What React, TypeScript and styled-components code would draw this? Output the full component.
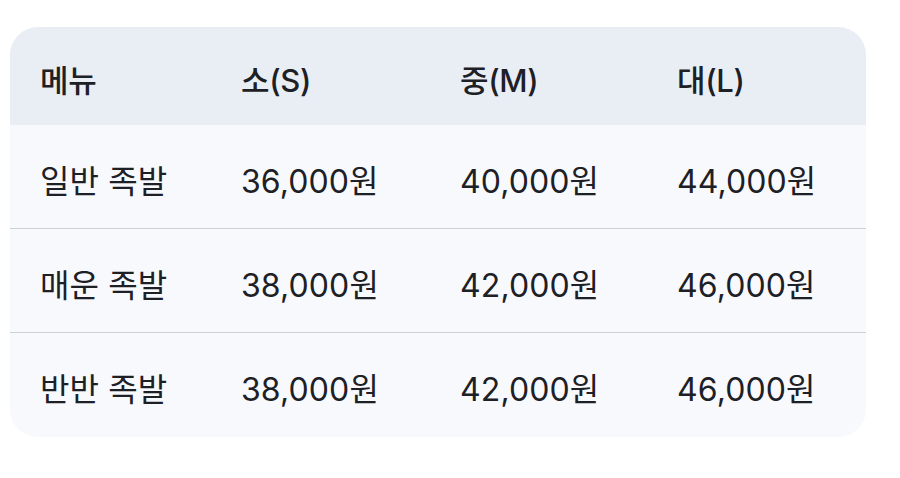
import React from "react";
import styled, { createGlobalStyle } from "styled-components";

const Global = createGlobalStyle`
  html, body { margin: 0; padding: 0; background: #ffffff; }
  body { font-family: Inter, "Noto Sans CJK KR", sans-serif; color: #1d2025; }
`;

const Page = styled.div`
  padding: 27px 0 0 10px;
`;

const Table = styled.div`
  width: 856px;
  border-radius: 28px;
  overflow: hidden;
  background: #f8f9fd;
  display: grid;
  grid-template-columns: 201px 219px 217px 219px;
`;

const Row = styled.div<{ $head?: boolean; $last?: boolean }>`
  display: contents;
  & > div {
    background: ${(p) => (p.$head ? "#e9eef4" : "#f8f9fd")};
    height: ${(p) => (p.$head ? "98px" : "104px")};
    font-weight: ${(p) => (p.$head ? 500 : 400)};
    font-size: ${(p) => (p.$head ? "31px" : "32px")};
    letter-spacing: ${(p) => (p.$head ? "-0.3px" : "0.1px")};
    border-bottom: ${(p) => (p.$head || p.$last ? "none" : "1px solid #cdd0d6")};
  }
`;

const Cell = styled.div`
  display: flex;
  align-items: center;
  padding-left: 30px;
  padding-top: 4px;
  box-sizing: border-box;
`;

const head = ["메뉴", "소(S)", "중(M)", "대(L)"];
const rows = [
  ["일반 족발", "36,000원", "40,000원", "44,000원"],
  ["매운 족발", "38,000원", "42,000원", "46,000원"],
  ["반반 족발", "38,000원", "42,000원", "46,000원"],
];

export default function App() {
  return (
    <>
      <Global />
      <Page>
        <Table>
          <Row $head>
            {head.map((h) => (
              <Cell key={h}>{h}</Cell>
            ))}
          </Row>
          {rows.map((r, i) => (
            <Row key={i} $last={i === rows.length - 1}>
              {r.map((c, j) => (
                <Cell key={j}>{c}</Cell>
              ))}
            </Row>
          ))}
        </Table>
      </Page>
    </>
  );
}
